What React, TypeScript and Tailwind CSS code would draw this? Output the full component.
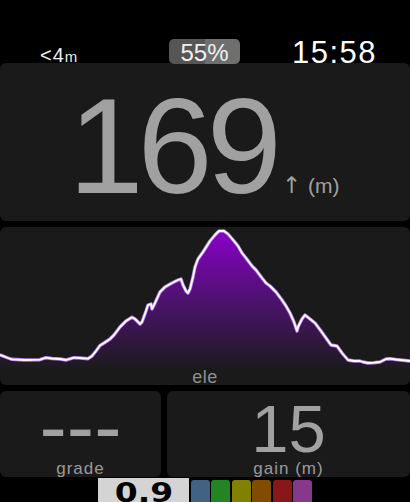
import React from "react";

const pts: [number, number][] = [
  [0, 128], [2, 128.7], [8, 131], [12, 132.3], [25, 133], [40, 132.7], [46, 130.7], [52, 131.5], [60, 132], [66, 133], [74, 130.7], [80, 131], [88, 131.7], [92, 129], [96, 124], [100, 118.5], [104, 116], [110, 112], [114, 108], [120, 100], [126, 94], [132, 90.3], [135, 92], [140, 97], [142, 95], [146, 84], [148, 78], [151, 77], [152, 82], [155, 76], [160, 65], [165, 60], [172, 56], [178, 53], [181, 52], [183, 58], [186, 64], [188, 66], [190, 62], [193, 50], [195, 40], [198, 32], [203, 25], [210, 14], [215, 8], [219, 4], [224, 4], [228, 7], [234, 14], [238, 19], [242, 26], [246, 31], [252, 39], [256, 43], [262, 51], [266, 56], [270, 59], [276, 65], [282, 73], [286, 79], [290, 86], [294, 95], [297, 104], [298, 100], [302, 92], [305, 88], [310, 92], [315, 96], [321, 104], [326, 111], [331, 118], [337, 119], [342, 126], [348, 133], [354, 134], [360, 134], [363, 135], [368, 136], [374, 135.7], [380, 135], [386, 132], [390, 131.7], [396, 132.5], [410, 134],
];

const line = pts.map((p) => p.join(",")).join(" ");
const area = `0,141 ${line} 410,141`;

const FONT = { fontFamily: '"Liberation Sans", Arial, sans-serif' };

export default function App() {
  return (
    <div className="w-[410px] h-[502px] bg-black overflow-hidden flex flex-col" style={FONT}>
      {/* status bar */}
      <div className="flex h-[63px] shrink-0 items-start">
        <div className="ml-[40px] mt-[45px] w-[129px] text-[20px] leading-none tracking-[1px] text-[#ededed]">
          &lt;4<span className="text-[15px] tracking-normal">m</span>
        </div>
        <div className="relative z-10 mt-[39px] h-[25px] w-[71px] overflow-hidden rounded-[5px] bg-[linear-gradient(to_right,#555555_51%,#6f6f6f_51%)] text-center text-[24px] leading-[27px] text-[#efefef]">
          55%
        </div>
        <div className="ml-[52px] mt-[37px] text-[31px] leading-none tracking-[1.5px] text-white">15:58</div>
      </div>

      {/* big value */}
      <div className="h-[158px] shrink-0 rounded-[6px] bg-[#1a1a1a] flex justify-center items-baseline pt-[16px] pr-[2px] text-[#a0a1a0]">
        <span className="text-[135px] leading-none tracking-[-6px]">169</span>
        <span
          className="ml-[6px] text-[23px] leading-none text-[#a0a1a0]"
          style={{ fontFamily: '"DejaVu Sans", sans-serif' }}
        >
          ↑
        </span>
        <span className="ml-[7px] text-[21px] leading-none">(m)</span>
      </div>

      {/* chart */}
      <div className="relative mt-[6px] h-[158px] shrink-0 overflow-hidden rounded-[6px] bg-[#1a1a1a]">
        <svg width="410" height="158" viewBox="0 0 410 158" className="block">
          <defs>
            <linearGradient id="g" x1="0" y1="0" x2="0" y2="1">
              <stop offset="0%" stopColor="#8a00c8" />
              <stop offset="50%" stopColor="#4e1270" />
              <stop offset="100%" stopColor="#1c1a1e" />
            </linearGradient>
          </defs>
          <polygon points={area} fill="url(#g)" />
          <polyline points={line} fill="none" stroke="#b77cf0" strokeWidth="3.4" strokeLinejoin="round" strokeLinecap="round" />
          <polyline points={line} fill="none" stroke="#ffffff" strokeWidth="1.8" strokeLinejoin="round" strokeLinecap="round" />
        </svg>
        <div className="absolute bottom-[-1px] left-0 right-0 text-center text-[18px] leading-none tracking-[0.5px] text-[#8e8e8e]">
          ele
        </div>
      </div>

      {/* small panels */}
      <div className="mt-[6px] flex h-[86px] shrink-0 gap-[6px]">
        <div className="flex w-[161px] flex-col items-center overflow-hidden rounded-[6px] bg-[#1a1a1a] pt-[26px]">
          <div className="h-[20px] text-[82px] leading-[20px] text-[#a0a1a0]">---</div>
          <div className="mt-[23px] text-[17px] leading-none tracking-[1px] text-[#9a9a9a]">grade</div>
        </div>
        <div className="flex flex-1 flex-col items-center overflow-hidden rounded-[6px] bg-[#1a1a1a] pt-[4px]">
          <div className="h-[65px] text-[67px] leading-[67px] text-[#a0a1a0]">15</div>
          <div className="text-[17px] leading-none tracking-[1px] text-[#9a9a9a]">gain (m)</div>
        </div>
      </div>

      {/* bottom bar */}
      <div className="mt-[1px] flex h-[24px] shrink-0 items-end gap-[1.5px] pl-[98px]">
        <div className="flex h-[24px] w-[91px] items-start justify-center overflow-hidden bg-[#d4d4d4]">
          <span
            className="mt-[1px] inline-block scale-x-[1.22] text-[27px] font-bold leading-[27px] text-black"
            style={{ fontFamily: '"DejaVu Sans", sans-serif' }}
          >
            0.9
          </span>
        </div>
        <div className="h-[22px] w-[19px] rounded-t-[3px] bg-[#416282]" />
        <div className="h-[22px] w-[19px] rounded-t-[3px] bg-[#228522]" />
        <div className="h-[22px] w-[19px] rounded-t-[3px] bg-[#828000]" />
        <div className="h-[22px] w-[19px] rounded-t-[3px] bg-[#824c00]" />
        <div className="h-[22px] w-[19px] rounded-t-[3px] bg-[#881818]" />
        <div className="h-[22px] w-[19px] rounded-t-[3px] bg-[#88388a]" />
      </div>
    </div>
  );
}
